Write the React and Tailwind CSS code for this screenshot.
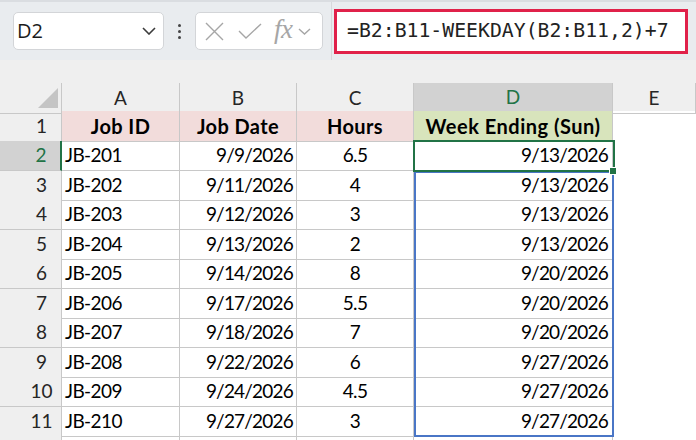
import React from 'react';

const rows = [
  ['JB-201', '9/9/2026', '6.5', '9/13/2026'],
  ['JB-202', '9/11/2026', '4', '9/13/2026'],
  ['JB-203', '9/12/2026', '3', '9/13/2026'],
  ['JB-204', '9/13/2026', '2', '9/13/2026'],
  ['JB-205', '9/14/2026', '8', '9/20/2026'],
  ['JB-206', '9/17/2026', '5.5', '9/20/2026'],
  ['JB-207', '9/18/2026', '7', '9/20/2026'],
  ['JB-208', '9/22/2026', '6', '9/27/2026'],
  ['JB-209', '9/24/2026', '4.5', '9/27/2026'],
  ['JB-210', '9/27/2026', '3', '9/27/2026'],
];

// row heights alternate so that the grid lands on the same pixels as the screenshot
const heights = ['h-[30px]', 'h-[30px]', 'h-[29px]', 'h-[30px]', 'h-[29px]', 'h-[30px]', 'h-[29px]', 'h-[30px]', 'h-[29px]', 'h-[30px]', 'h-[29px]'];

const COLS = 'grid grid-cols-[62px_118px_117px_117px_199px_1fr]';
const cell = 'border-r border-b border-[#c8c8c8] flex items-center';

const Toolbar = () => (
  <div className="h-[60px] bg-[#e9ecef] border-t-2 border-[#dadde1] flex items-center">
    {/* Name box */}
    <div className="ml-[13px] w-[151px] h-[38px] bg-white border border-[#d3d5d8] rounded-[5px] flex items-center justify-between pl-[3px] pr-[7px]">
      <span className="text-[20px] text-[#1b1b1b] font-['Open_Sans'] leading-none">D2</span>
      <svg width="14" height="8" viewBox="0 0 14 8" fill="none">
        <path d="M1 1l6 6 6-6" stroke="#3c3c3c" strokeWidth="1.6" />
      </svg>
    </div>

    {/* Drag dots */}
    <div className="w-[31px] flex flex-col items-center gap-[3px]">
      <span className="w-[3px] h-[3px] rounded-full bg-[#444]" />
      <span className="w-[3px] h-[3px] rounded-full bg-[#444]" />
      <span className="w-[3px] h-[3px] rounded-full bg-[#444]" />
    </div>

    {/* Cancel / enter / fx */}
    <div className="w-[128px] h-[38px] bg-white border border-[#d3d5d8] rounded-[5px] flex items-center pl-[9px]">
      <svg width="19" height="19" viewBox="0 0 19 19" fill="none">
        <path d="M1 1l17 17M18 1L1 18" stroke="#a6a6a6" strokeWidth="1.4" />
      </svg>
      <svg className="ml-[14px]" width="24" height="16" viewBox="0 0 24 16" fill="none">
        <path d="M1 8l7 7L23 1" stroke="#a6a6a6" strokeWidth="1.4" />
      </svg>
      <span className="ml-[12px] text-[27px] italic text-[#a6a6a6] font-['Liberation_Serif'] leading-none tracking-[-0.5px] mb-[3px]">fx</span>
      <svg className="ml-[5px]" width="13" height="7" viewBox="0 0 13 7" fill="none">
        <path d="M1 1l5.5 5 5.5-5" stroke="#a6a6a6" strokeWidth="1.4" />
      </svg>
    </div>

    <div className="ml-[8px] w-px h-[58px] bg-[#d6d8db]" />

    {/* Formula box */}
    <div className="ml-[2px] w-[354px] h-[45px] bg-white border-[3px] border-[#e0214a] flex items-center pl-[10px]">
      <span className="text-[19.8px] text-[#222] font-['DejaVu_Sans_Mono'] leading-none">=B2:B11-WEEKDAY(B2:B11,2)+7</span>
    </div>
  </div>
);

const App = () => {
  return (
    <div className="w-[696px] h-[440px] overflow-hidden bg-white font-['Lato',sans-serif]">
      <Toolbar />
      <div className="h-[23px] bg-[#efefef]" />

      <div className="relative">
        {/* Column headers */}
        <div className={`${COLS} h-[28px] bg-[#efefef] text-[19px] text-[#262626]`}>
          <div className="border-r border-b border-[#c8c8c8] relative">
            <svg className="absolute left-[38px] top-[5px]" width="20" height="20" viewBox="0 0 20 20">
              <path d="M20 0V20H0Z" fill="#c4c4c4" />
            </svg>
          </div>
          <div className={`${cell} justify-center`}>A</div>
          <div className={`${cell} justify-center`}>B</div>
          <div className={`${cell} justify-center`}>C</div>
          <div className="border-r border-[#c8c8c8] border-b-2 border-b-[#217346] bg-[#d2d2d2] flex items-center justify-center text-[#217346]">D</div>
          <div className={`${cell} justify-center`}>E</div>
        </div>

        {/* Header row */}
        <div className={`${COLS} ${heights[0]} text-[20px] text-black`}>
          <div className={`${cell} bg-[#efefef] justify-center pl-[22px] text-[19px] text-[#262626]`}>1</div>
          <div className={`${cell} bg-[#f2dcdb] justify-center font-bold tracking-[0.4px]`}>Job ID</div>
          <div className={`${cell} bg-[#f2dcdb] justify-center font-bold tracking-[0.4px]`}>Job Date</div>
          <div className={`${cell} bg-[#f2dcdb] justify-center font-bold tracking-[0.4px]`}>Hours</div>
          <div className={`${cell} bg-[#d8e4bc] justify-center font-bold tracking-[0.5px]`}>Week Ending (Sun)</div>
          <div />
        </div>

        {/* Data rows */}
        {rows.map((r, i) => {
          const selected = i === 0;
          return (
            <div key={r[0]} className={`${COLS} ${heights[i + 1]} text-[19px] text-black`}>
              <div
                className={`border-b border-[#c8c8c8] flex items-center justify-center pl-[22px] ${
                  selected ? 'bg-[#d2d2d2] text-[#217346] border-r-2 border-r-[#217346]' : 'bg-[#efefef] text-[#262626] border-r'
                }`}
              >
                {i + 2}
              </div>
              <div className={`${cell} pl-[3px] tracking-[-0.6px]`}>{r[0]}</div>
              <div className={`${cell} justify-end pr-[3px] tracking-[-0.8px]`}>{r[1]}</div>
              <div className={`${cell} justify-center tracking-[-0.6px]`}>{r[2]}</div>
              <div className={`${cell} justify-end pr-[4px] tracking-[-0.8px]`}>{r[3]}</div>
              <div />
            </div>
          );
        })}

        {/* Filler row below row 11 */}
        <div className={`${COLS} h-[10px]`}>
          <div className="bg-[#efefef] border-r border-[#c8c8c8]" />
          <div className="border-r border-[#c8c8c8]" />
          <div className="border-r border-[#c8c8c8]" />
          <div className="border-r border-[#c8c8c8]" />
          <div className="border-r border-[#c8c8c8]" />
          <div />
        </div>

        {/* Spill range outline D3:D11 */}
        <div className="absolute left-[414px] top-[88px] w-[200px] h-[266px] border-2 border-[#4a76c6] pointer-events-none" />
        {/* Active cell D2 */}
        <div className="absolute left-[413px] top-[57px] w-[202px] h-[32px] border-2 border-[#217346] pointer-events-none" />
        {/* Fill handle */}
        <div className="absolute left-[609px] top-[84px] w-[8px] h-[8px] bg-[#217346] border border-white pointer-events-none" />
      </div>
    </div>
  );
};

export default App;
